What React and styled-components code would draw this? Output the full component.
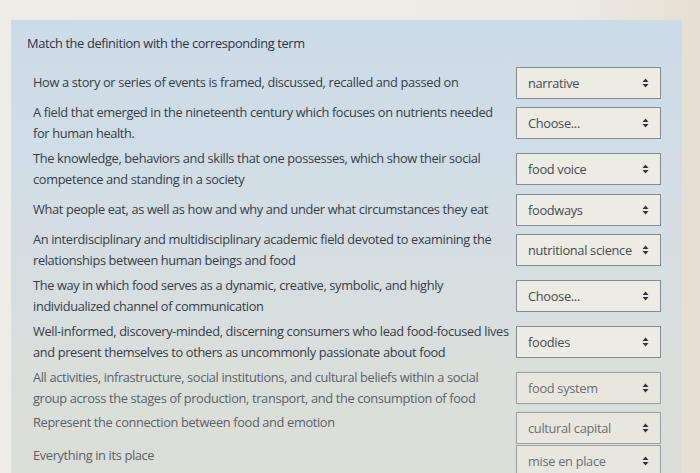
import React from 'react';
import styled, { createGlobalStyle } from 'styled-components';

const GlobalStyle = createGlobalStyle`
  html, body {
    margin: 0;
    padding: 0;
    height: 100%;
    overflow: hidden;
  }
  body {
    background: linear-gradient(90deg, #eeede8 0%, #edebe6 80%, #e6dfd2 100%);
    font-family: "Open Sans", "Noto Sans", sans-serif;
    font-variant-ligatures: none;
  }
`;

const Page = styled.div`
  padding: 20px 18px 0 11px;
  height: 473px;
  box-sizing: border-box;
  overflow: hidden;
`;

const Panel = styled.div`
  background: linear-gradient(180deg, #ccdbe9 0%, #d2dde5 35%, #d9dedd 65%, #dcded6 100%);
  padding: 13px 21px 20px 16px;
  min-height: 470px;
  box-sizing: border-box;
`;

const Title = styled.div`
  font-size: 12.8px;
  letter-spacing: -0.35px;
  line-height: 20px;
  color: #2f3440;
  margin-bottom: 12px;
`;

const Rows = styled.div`
  display: flex;
  flex-direction: column;
  padding-left: 6px;
`;

const Row = styled.div`
  display: flex;
  align-items: ${(p) => (p.$top ? 'flex-start' : 'center')};
  justify-content: space-between;
  padding: ${(p) => (p.$top ? '0.5px 0' : '1.5px 0')};
`;

const Prompt = styled.div`
  width: 477px;
  font-size: 12.8px;
  letter-spacing: -0.35px;
  line-height: 21.5px;
  color: ${(p) => (p.$dim ? '#5b6068' : '#363c48')};
`;

const Select = styled.div`
  position: relative;
  width: 145px;
  height: 32px;
  box-sizing: border-box;
  border: 1px solid ${(p) => (p.$dim ? '#9a9da2' : '#838997')};
  background: ${(p) => (p.$dim ? '#e7e7e0' : '#ecebe4')};
  display: flex;
  align-items: center;
  padding: 0 24px 0 11px;
  font-size: 12.8px;
  letter-spacing: -0.3px;
  color: ${(p) => (p.$dim ? '#6a6e74' : '#454b56')};
  white-space: nowrap;
`;

const Caret = styled.svg`
  position: absolute;
  right: 11px;
  top: 50%;
  margin-top: -5px;
  width: 7px;
  height: 10px;
`;

const SortCaret = () => (
  <Caret viewBox="0 0 7 10">
    <path d="M3.5 0.5 L6.5 4 L0.5 4 Z M0.5 6 L6.5 6 L3.5 9.5 Z" fill="#2f333b" />
  </Caret>
);

const items = [
  { text: 'How a story or series of events is framed, discussed, recalled and passed on', value: 'narrative' },
  { text: 'A field that emerged in the nineteenth century which focuses on nutrients needed for human health.', value: 'Choose...' },
  { text: 'The knowledge, behaviors and skills that one possesses, which show their social competence and standing in a society', value: 'food voice' },
  { text: 'What people eat, as well as how and why and under what circumstances they eat', value: 'foodways' },
  { text: 'An interdisciplinary and multidisciplinary academic field devoted to examining the relationships between human beings and food', value: 'nutritional science' },
  { text: 'The way in which food serves as a dynamic, creative, symbolic, and highly individualized channel of communication', value: 'Choose...' },
  { text: 'Well-informed, discovery-minded, discerning consumers who lead food-focused lives and present themselves to others as uncommonly passionate about food', value: 'foodies' },
  { text: 'All activities, infrastructure, social institutions, and cultural beliefs within a social group across the stages of production, transport, and the consumption of food', value: 'food system', dim: true },
  { text: 'Represent the connection between food and emotion', value: 'cultural capital', dim: true, top: true },
  { text: 'Everything in its place', value: 'mise en place', dim: true, top: true },
];

export default function App() {
  return (
    <Page>
      <GlobalStyle />
      <Panel>
        <Title>Match the definition with the corresponding term</Title>
        <Rows>
          {items.map((item, i) => (
            <Row key={i} $top={item.top}>
              <Prompt $dim={item.dim}>{item.text}</Prompt>
              <Select $dim={item.dim}>
                {item.value}
                <SortCaret />
              </Select>
            </Row>
          ))}
        </Rows>
      </Panel>
    </Page>
  );
}
